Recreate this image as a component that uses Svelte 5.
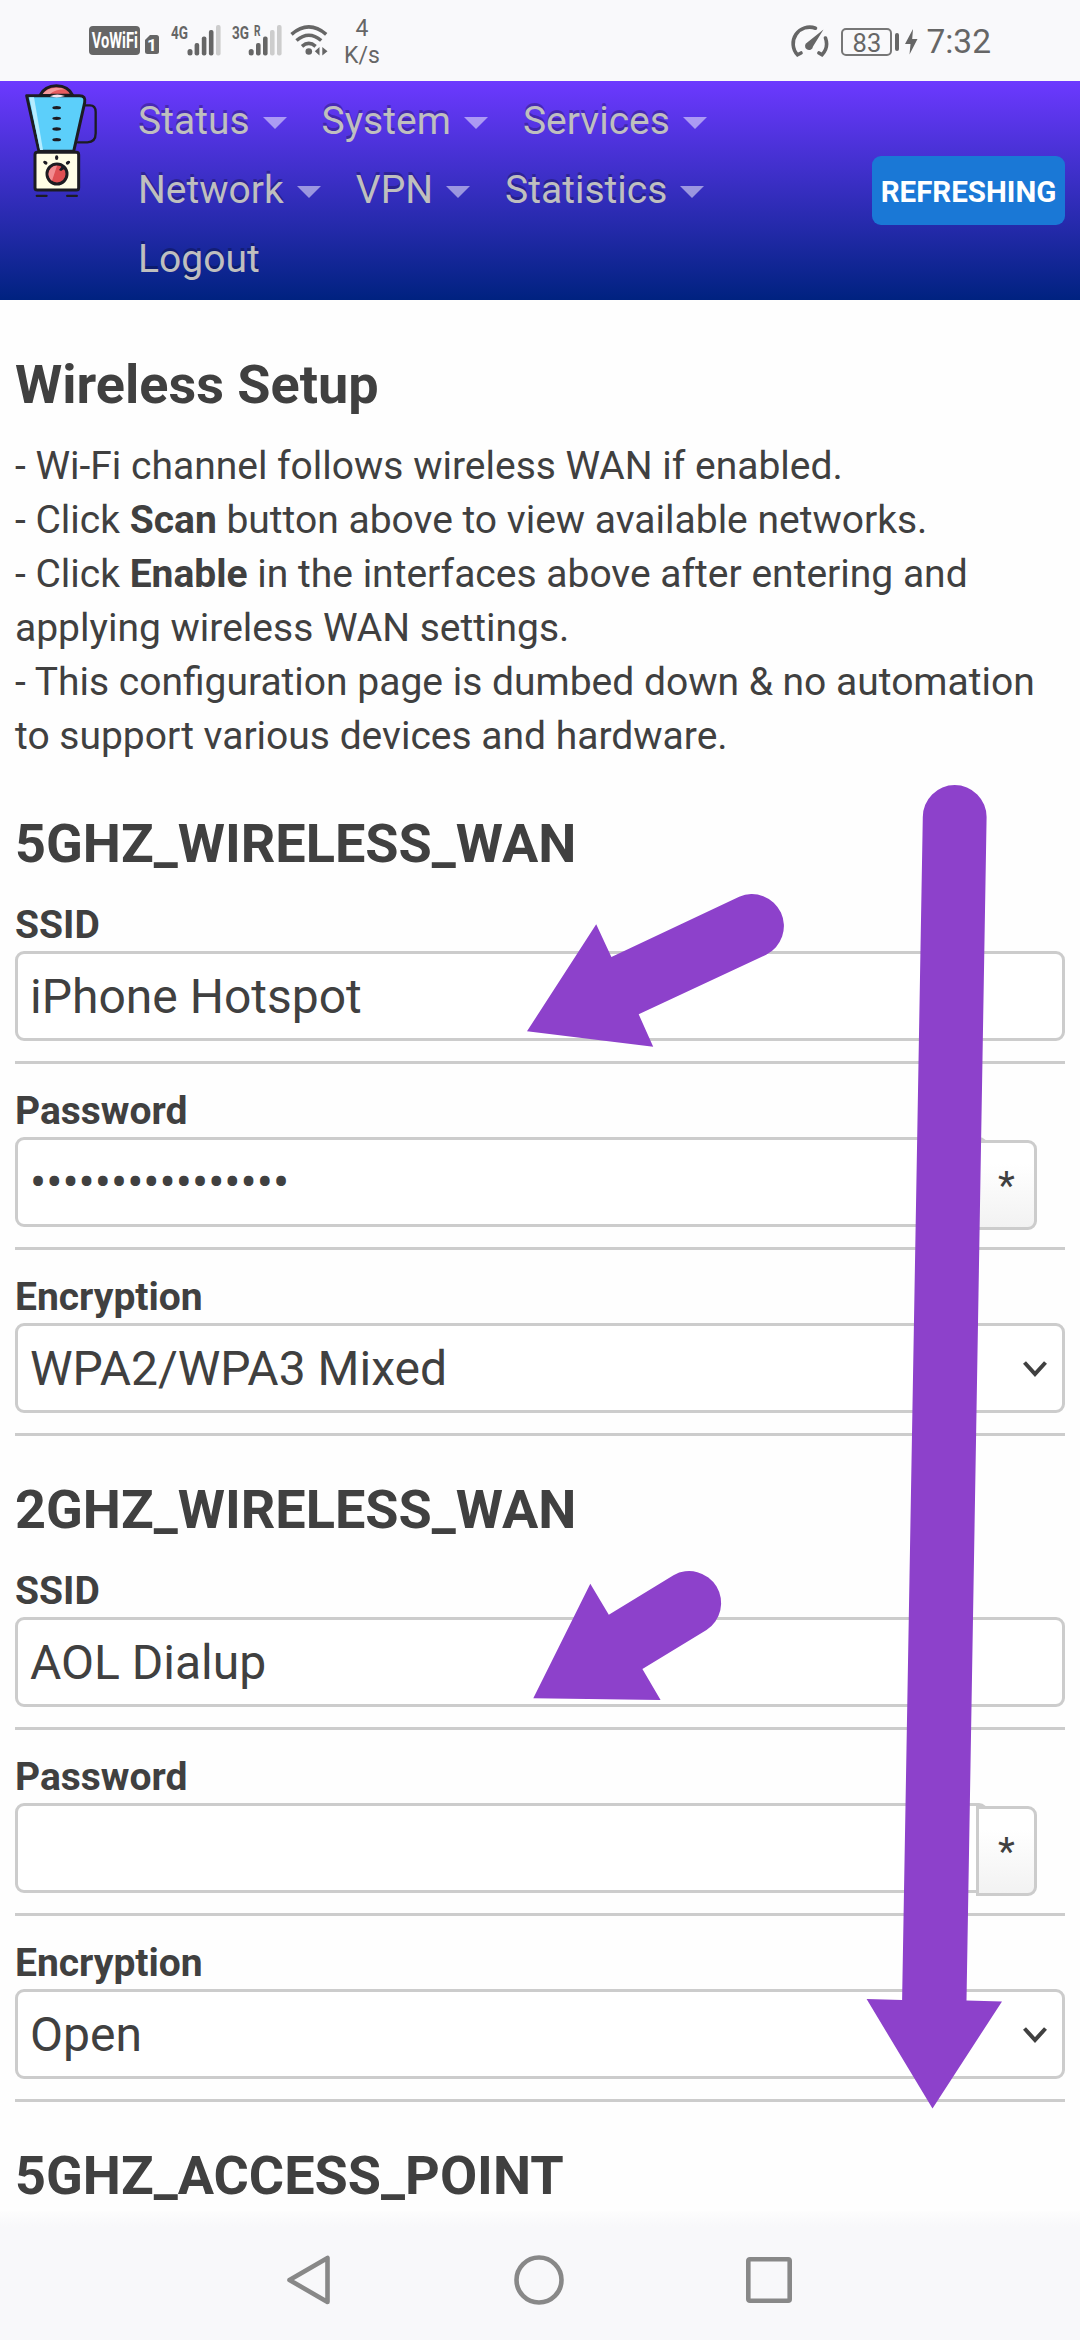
<script>
  const menu = [
    { label: 'Status', caret: true },
    { label: 'System', caret: true },
    { label: 'Services', caret: true },
    { label: 'Network', caret: true },
    { label: 'VPN', caret: true },
    { label: 'Statistics', caret: true },
    { label: 'Logout', caret: false }
  ];

  const sections = [
    { title: '5GHZ_WIRELESS_WAN', ssid: 'iPhone Hotspot', password: '•'.repeat(16), encryption: 'WPA2/WPA3 Mixed' },
    { title: '2GHZ_WIRELESS_WAN', ssid: 'AOL Dialup', password: '', encryption: 'Open' }
  ];
</script>

<div class="screen">
  <div class="status">
    <div class="left">
      <span class="vowifi"><span>VoWiFi</span></span>
      <svg class="sim" width="14" height="19" viewBox="0 0 14 19">
        <path d="M5 0H11.5Q14 0 14 2.5V16.5Q14 19 11.5 19H2.500Q0 19 0 16.500V5Z" fill="#666" />
        <text x="7" y="15.500" text-anchor="middle" class="simno">1</text>
      </svg>
      <svg class="signals" width="112" height="34" viewBox="170 23 112 34">
        <g class="net">
          <text x="171" y="38.500" textLength="17" lengthAdjust="spacingAndGlyphs">4G</text>
          <text x="232" y="38.500" textLength="17" lengthAdjust="spacingAndGlyphs">3G</text>
          <text x="254" y="35.500" class="roam" textLength="6.500" lengthAdjust="spacingAndGlyphs">R</text>
        </g>
        <g fill="#666">
          <rect x="187.500" y="49" width="5" height="6.500" rx="2.500" />
          <rect x="194.600" y="43" width="4.600" height="12.500" rx="2" />
          <rect x="201.800" y="36.500" width="4.600" height="19" rx="2" />
          <rect x="208.900" y="30" width="4.600" height="25.500" rx="2" />
          <rect x="248.700" y="49" width="5" height="6.500" rx="2.500" />
          <rect x="256" y="43" width="4.600" height="12.500" rx="2" />
          <rect x="263" y="36.500" width="4.600" height="19" rx="2" />
        </g>
        <g fill="#cdcdcd">
          <rect x="216" y="25" width="4.600" height="30.500" rx="2" />
          <rect x="270" y="30" width="4.600" height="25.500" rx="2" />
          <rect x="277" y="25" width="4.600" height="30.500" rx="2" />
        </g>
      </svg>
      <svg class="wifi" width="38" height="34" viewBox="290 23 38 34">
        <g fill="none" stroke="#666" stroke-width="3.600">
          <path d="M291.500 34.300Q308.800 19.500 326.200 34.300" />
          <path d="M296.500 40.500Q308.800 30 321.200 40.500" />
          <path d="M302 46.300Q308.800 40.500 315.600 46.300" />
        </g>
        <circle cx="308.800" cy="51.500" r="3.300" fill="#666" />
        <path d="M319.500 47V55.500L314.800 51.200ZM322.300 47V55.500L327.500 51.200Z" fill="#666" />
      </svg>
      <span class="speed">4<br />K/s</span>
    </div>
    <div class="right">
      <svg width="40" height="36" viewBox="790 23 40 36">
        <g fill="none" stroke="#666" stroke-width="3.600" stroke-linecap="round">
          <path d="M815.500 28.200A16.500 16.500 0 0 0 797.500 54.800L801 53" />
          <path d="M825.500 38A16.500 16.500 0 0 1 822 54.800L819 53" />
        </g>
        <path d="M823.500 29.500L813 46.500A4 4 0 1 1 807.200 42.500Z" fill="#666" />
      </svg>
      <span class="battery">83</span>
      <span class="nub"></span>
      <svg class="bolt" width="13" height="26" viewBox="0 0 13 26"><path d="M8 0L0 15H5.500L4.500 25.500L12.500 10H7.200Z" fill="#666" /></svg>
      <span class="time">7:32</span>
    </div>
  </div>

  <header>
    <svg class="logo" width="138" height="219" viewBox="0 33 414 657">
      <g stroke="#1c1c22" stroke-width="9" stroke-linejoin="round" stroke-linecap="round">
        <path d="M252 106H270Q287 106 287 126V190Q287 217 262 217H234" fill="none" stroke-width="7" />
        <path d="M120 76Q134 47 169 47Q205 47 218 76Z" fill="#e55b5f" />
        <path d="M80 77H238Q258 77 254 98L221 244H117Z" fill="#5ccffa" />
        <rect x="105" y="247" width="131" height="113" rx="7" fill="#fffee6" />
        <circle cx="171" cy="312" r="30" fill="#df4f53" />
      </g>
      <path d="M128 72Q142 54 168 53Q186 53 196 58Q164 58 150 72Z" fill="#f49a9c" />
      <path d="M88 82H102L129 240H120Z" fill="#b5ecff" />
      <path d="M150 79Q170 68 195 78Q170 86 150 79Z" fill="#f3e4ef" />
      <path d="M171 287A25 25 0 0 0 156 332Z" fill="#f28c90" />
      <path d="M177 300L186 288L194 296L183 303Z" fill="#1c1c22" />
      <g fill="#1c1c22">
        <ellipse cx="170" cy="113" rx="13" ry="5" />
        <ellipse cx="170" cy="145" rx="13" ry="5" />
        <ellipse cx="170" cy="177" rx="13" ry="5" />
        <ellipse cx="170" cy="209" rx="13" ry="5" />
        <ellipse cx="170" cy="263" rx="5" ry="7" />
        <ellipse cx="136" cy="278" rx="7" ry="5" transform="rotate(35 136 278)" />
        <ellipse cx="204" cy="278" rx="7" ry="5" transform="rotate(-35 204 278)" />
        <rect x="107" y="374" width="36" height="7" rx="3.500" />
        <rect x="198" y="374" width="36" height="7" rx="3.500" />
      </g>
    </svg>
    <nav>
      {#each menu as item}
        <a class="item" href="#top">{item.label}{#if item.caret}<i class="caret"></i>{/if}</a>
      {/each}
    </nav>
    <span class="refresh">REFRESHING</span>
  </header>

  <main>
    <h2>Wireless Setup</h2>
    <p>
      - Wi-Fi channel follows wireless WAN if enabled.<br />
      - Click <b>Scan</b> button above to view available networks.<br />
      - Click <b>Enable</b> in the interfaces above after entering and<br />applying wireless WAN settings.<br />
      - This configuration page is dumbed down &amp; no automation<br />to support various devices and hardware.
    </p>

    {#each sections as s}
      <section>
        <h3>{s.title}</h3>
        <div class="field">
          <div class="label">SSID</div>
          <div class="box">{s.ssid}</div>
        </div>
        <div class="field">
          <div class="label">Password</div>
          <div class="secret">
            <div class="box">{s.password}</div>
            <button>*</button>
          </div>
        </div>
        <div class="field">
          <div class="label">Encryption</div>
          <div class="box select">
            {s.encryption}
            <svg width="24" height="16" viewBox="0 0 24 16"><path d="M1.500 1.500L12 13L22.500 1.500" fill="none" stroke="#404040" stroke-width="4" /></svg>
          </div>
        </div>
      </section>
    {/each}
    <section><h3>5GHZ_ACCESS_POINT</h3></section>
  </main>

  <footer>
    <svg width="44" height="52" viewBox="0 0 44 52"><path d="M2.500 26L40.500 4V48Z" /></svg>
    <svg width="50" height="50" viewBox="0 0 50 50"><circle cx="25" cy="25" r="22.500" /></svg>
    <svg width="46" height="46" viewBox="0 0 46 46"><rect x="2.300" y="2.300" width="41.400" height="41.400" rx="1.500" /></svg>
  </footer>

  <!-- annotation arrows over the page -->
  <svg class="arrows" width="1080" height="2340" viewBox="0 0 1080 2340">
    <path d="M527 1031.300L596.200 924.300L611.400 957L739.200 896.700A32 32 0 0 1 766.200 954.700L638.700 1014.300L653.200 1046.700Z" />
    <path d="M533.300 1698.300L590.300 1583.700L608.800 1614.700L673.500 1575.200A32 32 0 0 1 706.500 1630L642.400 1669L660.600 1700Z" />
    <path d="M932.500 2108.500L866.600 1999.100L902.100 1999.900L922.800 817A31.900 31.900 0 0 1 986.600 817L966.500 2000.600L1002 2001.400Z" />
  </svg>
</div>

<style>
  :global(body) { margin: 0; background: #fefefe; }
  .screen {
    position: relative;
    display: flex;
    flex-direction: column;
    width: 1080px;
    height: 2340px;
    overflow: hidden;
    background: #fefefe;
    color: #404040;
    font: 39px/54px Roboto, sans-serif;
  }
  svg { display: block; flex: none; }

  .status {
    display: flex;
    justify-content: space-between;
    height: 81px;
    padding: 0 89px;
    box-sizing: border-box;
    background: #f9f9fb;
    color: #666;
  }
  .left, .right { display: flex; align-items: flex-start; }
  .vowifi {
    display: flex;
    justify-content: center;
    width: 51px;
    height: 29px;
    margin-top: 26px;
    border-radius: 4px;
    background: #666;
    color: #fff;
    font-weight: 700;
    font-size: 21.500px;
    line-height: 30px;
  }
  .vowifi span { transform: scaleX(0.68); }
  .sim { margin: 35px 0 0 5px; }
  .simno { font-size: 17px; font-weight: 700; fill: #fff; }
  .signals { margin: 23px 0 0 11px; }
  .net { font-size: 18.500px; font-weight: 700; fill: #666; }
  .roam { font-size: 15px; }
  .wifi { margin: 23px 0 0 8px; }
  .speed {
    width: 44px;
    margin: 15px 0 0 12px;
    font-size: 23px;
    line-height: 27px;
    text-align: center;
  }
  .right > svg:first-child { margin-top: 23px; }
  .battery {
    width: 51px;
    height: 28px;
    margin: 28px 0 0 11px;
    box-sizing: border-box;
    border: 2px solid #777;
    border-radius: 5px;
    font-size: 25.500px;
    line-height: 26px;
    text-align: center;
  }
  .nub { width: 4.500px; height: 18px; margin: 33px 0 0 2.500px; border-radius: 2px; background: #666; }
  .bolt { margin: 29px 0 0 6px; }
  .time { margin: 22px 0 0 8px; font-size: 33.500px; line-height: 40px; }

  header {
    display: flex;
    align-items: flex-start;
    height: 219px;
    padding-right: 15px;
    box-sizing: border-box;
    background: linear-gradient(#6c39ff, #002280);
  }
  nav {
    display: flex;
    flex-wrap: wrap;
    width: 640px;
    margin-top: 6px;
    column-gap: 35px;
  }
  .item {
    display: flex;
    align-items: center;
    color: #bfbfbf;
    line-height: 69px;
    text-decoration: none;
    text-shadow: 0 -3px 0 rgba(0, 0, 0, 0.25);
  }
  .caret {
    margin: 3px 0 0 13px;
    border: 12px solid transparent;
    border-top-color: rgba(255, 255, 255, 0.5);
    border-bottom: 0;
  }
  .refresh {
    width: 193px;
    height: 69px;
    margin: 75px 0 0 auto;
    border-radius: 9px;
    background: #1a78d6;
    color: #fff;
    font-size: 29.500px;
    font-weight: 700;
    line-height: 72px;
    text-align: center;
  }

  main { flex: none; height: 1911px; padding: 49px 15px 0; box-sizing: border-box; }
  h2, h3 { margin: 0; font-size: 54px; line-height: 72px; font-weight: 700; }
  p { margin: 18px 0 27px; white-space: nowrap; }
  section { padding-top: 18px; }
  h3 { margin-bottom: 18px; }
  .field { border-bottom: 3px solid #ccc; padding-bottom: 20px; margin-bottom: 20px; }
  .label { margin-bottom: -1px; font-weight: 700; }
  .box {
    height: 90px;
    padding: 0 12px;
    box-sizing: border-box;
    border: 3px solid #ccc;
    border-radius: 9px;
    background: #fff;
    font-size: 48px;
    line-height: 86px;
  }
  .select { display: flex; justify-content: space-between; align-items: flex-start; padding-right: 15px; }
  .select svg { margin-top: 35px; }
  .secret { display: flex; height: 90px; }
  .secret .box { width: 973px; }
  button {
    width: 61px;
    height: 90px;
    margin: 3px 0 0 -12px;
    padding: 3px 0 0;
    border: 3px solid #ccc;
    border-radius: 0 9px 9px 0;
    background: linear-gradient(#fff 25%, #f2f2f2);
    color: #404040;
    font: 39px/81px Roboto, sans-serif;
  }

  footer {
    display: flex;
    align-items: center;
    height: 129px;
    padding: 9px 288px 0 287px;
    justify-content: space-between;
    box-sizing: border-box;
    background: linear-gradient(#fdfdfd, #f8f8fa 16px);
  }
  footer svg { fill: none; stroke: #888; stroke-width: 4.600; stroke-linejoin: round; }
  .arrows { position: absolute; inset: 0; fill: #8d41cb; }
</style>
